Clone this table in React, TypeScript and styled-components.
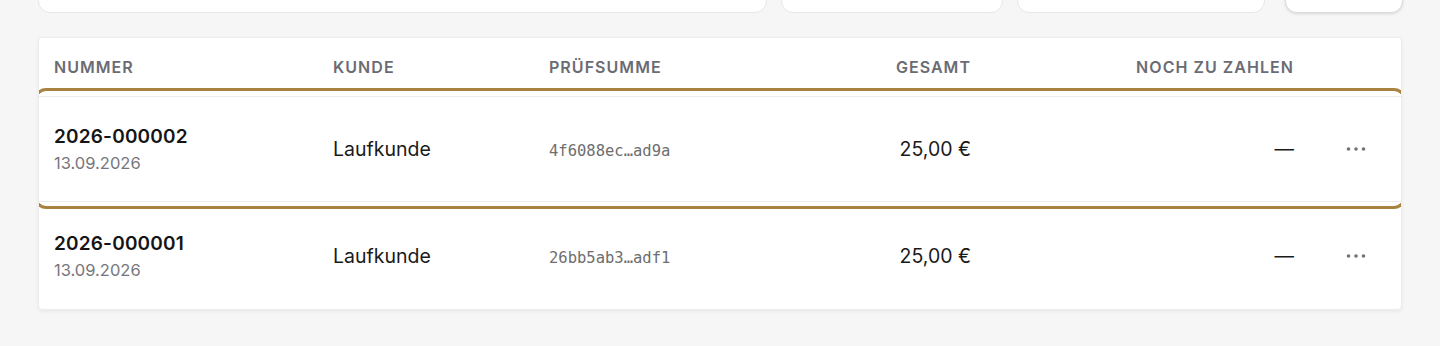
import React from 'react';
import styled, {createGlobalStyle, css} from 'styled-components';

const GlobalStyle = createGlobalStyle`
  html, body {
    margin: 0;
    padding: 0;
    background: #f6f6f6;
    font-family: Inter, "Noto Sans", "Liberation Sans", sans-serif;
    color: #1a1a1a;
  }
`;

const Page = styled.div`
  padding: 0 38px;
  overflow: hidden;
  height: 346px;
  box-sizing: border-box;
`;

const Toolbar = styled.div`
  display: flex;
  align-items: stretch;
  margin-top: -31px;
  height: 44px;
  gap: 14px;
`;

const FilterBox = styled.div<{ $width: number; $button?: boolean }>`
  width: ${p => p.$width}px;
  flex: none;
  background: #fff;
  border: 1px solid #e6e6e6;
  border-radius: 12px;
  box-sizing: border-box;
  ${p => p.$button && css`
    margin-left: 6px;
    border-color: #dcdcdc;
    box-shadow: 0 1px 3px rgba(0, 0, 0, 0.12);
  `}
`;

const TableCard = styled.div`
  margin-top: 24px;
  background: #fff;
  border: 1px solid #ececec;
  border-radius: 4px;
  box-shadow: 0 2px 4px rgba(0, 0, 0, 0.05);
  overflow: hidden;
`;

const columns = '278px 216px 250px 204px 323px 1fr';

const HeaderRow = styled.div`
  display: grid;
  grid-template-columns: ${columns};
  align-items: center;
  height: 58px;
  border-bottom: 1px solid #ececec;
`;

const HeadCell = styled.div<{ $align?: 'left' | 'right' }>`
  padding: 0 16px;
  text-align: ${p => p.$align || 'left'};
  font-size: 16px;
  font-weight: 600;
  letter-spacing: 0.065em;
  text-transform: uppercase;
  color: #6b6b73;

  &:first-child {
    padding-left: 15px;
  }
`;

const Row = styled.div<{ $selected?: boolean }>`
  position: relative;
  display: grid;
  grid-template-columns: ${columns};
  align-items: center;
  height: 104px;
  border-bottom: 1px solid #ececec;

  &:last-child {
    border-bottom: none;
    height: 107px;
  }

  ${p => p.$selected && css`
    &::after {
      content: '';
      position: absolute;
      top: -9px;
      bottom: -8px;
      left: -5px;
      right: -5px;
      border: 3px solid #a8823e;
      border-radius: 12px;
      pointer-events: none;
    }
  `}
`;

const Cell = styled.div<{ $align?: 'left' | 'right' | 'center' }>`
  padding: 0 16px;
  text-align: ${p => p.$align || 'left'};
  font-size: 19.5px;

  &:first-child {
    padding-left: 15px;
  }
`;

const InvoiceNumber = styled.div`
  font-size: 19px;
  font-weight: 600;
  color: #151515;
  letter-spacing: 0.01em;
`;

const DateText = styled.div`
  margin-top: 5px;
  font-size: 16.5px;
  color: #76767e;
`;

const Hash = styled.span`
  font-family: "DejaVu Sans Mono", "Liberation Mono", monospace;
  font-size: 15.5px;
  color: #6e6e6e;
`;

const MoreButton = styled.button`
  border: none;
  background: none;
  padding: 0;
  margin: 0 auto;
  cursor: pointer;
  display: flex;
  align-items: center;
  justify-content: center;

  svg {
    display: block;
  }
`;

type Invoice = {
  number: string;
  date: string;
  customer: string;
  hash: string;
  total: string;
  open: string;
};

const invoices: Invoice[] = [
  {number: '2026-000002', date: '13.09.2026', customer: 'Laufkunde', hash: '4f6088ec…ad9a', total: '25,00 €', open: '—'},
  {number: '2026-000001', date: '13.09.2026', customer: 'Laufkunde', hash: '26bb5ab3…adf1', total: '25,00 €', open: '—'},
];

const Dots = () => (
  <svg width="20" height="6" viewBox="0 0 20 6" fill="#737373">
    <circle cx="2.5" cy="3" r="1.8"/>
    <circle cx="10" cy="3" r="1.8"/>
    <circle cx="17.5" cy="3" r="1.8"/>
  </svg>
);

export default function App() {
  return (
    <>
      <GlobalStyle/>
      <Page>
        <Toolbar>
          <FilterBox $width={729}/>
          <FilterBox $width={222}/>
          <FilterBox $width={248}/>
          <FilterBox $width={118} $button/>
        </Toolbar>

        <TableCard>
          <HeaderRow>
            <HeadCell>Nummer</HeadCell>
            <HeadCell>Kunde</HeadCell>
            <HeadCell>Prüfsumme</HeadCell>
            <HeadCell $align="right">Gesamt</HeadCell>
            <HeadCell $align="right">Noch zu zahlen</HeadCell>
            <HeadCell/>
          </HeaderRow>

          {invoices.map((inv, i) => (
            <Row key={inv.number} $selected={i === 0}>
              <Cell>
                <InvoiceNumber>{inv.number}</InvoiceNumber>
                <DateText>{inv.date}</DateText>
              </Cell>
              <Cell>{inv.customer}</Cell>
              <Cell><Hash>{inv.hash}</Hash></Cell>
              <Cell $align="right">{inv.total}</Cell>
              <Cell $align="right">{inv.open}</Cell>
              <Cell $align="center">
                <MoreButton aria-label="Mehr"><Dots/></MoreButton>
              </Cell>
            </Row>
          ))}
        </TableCard>
      </Page>
    </>
  );
}
